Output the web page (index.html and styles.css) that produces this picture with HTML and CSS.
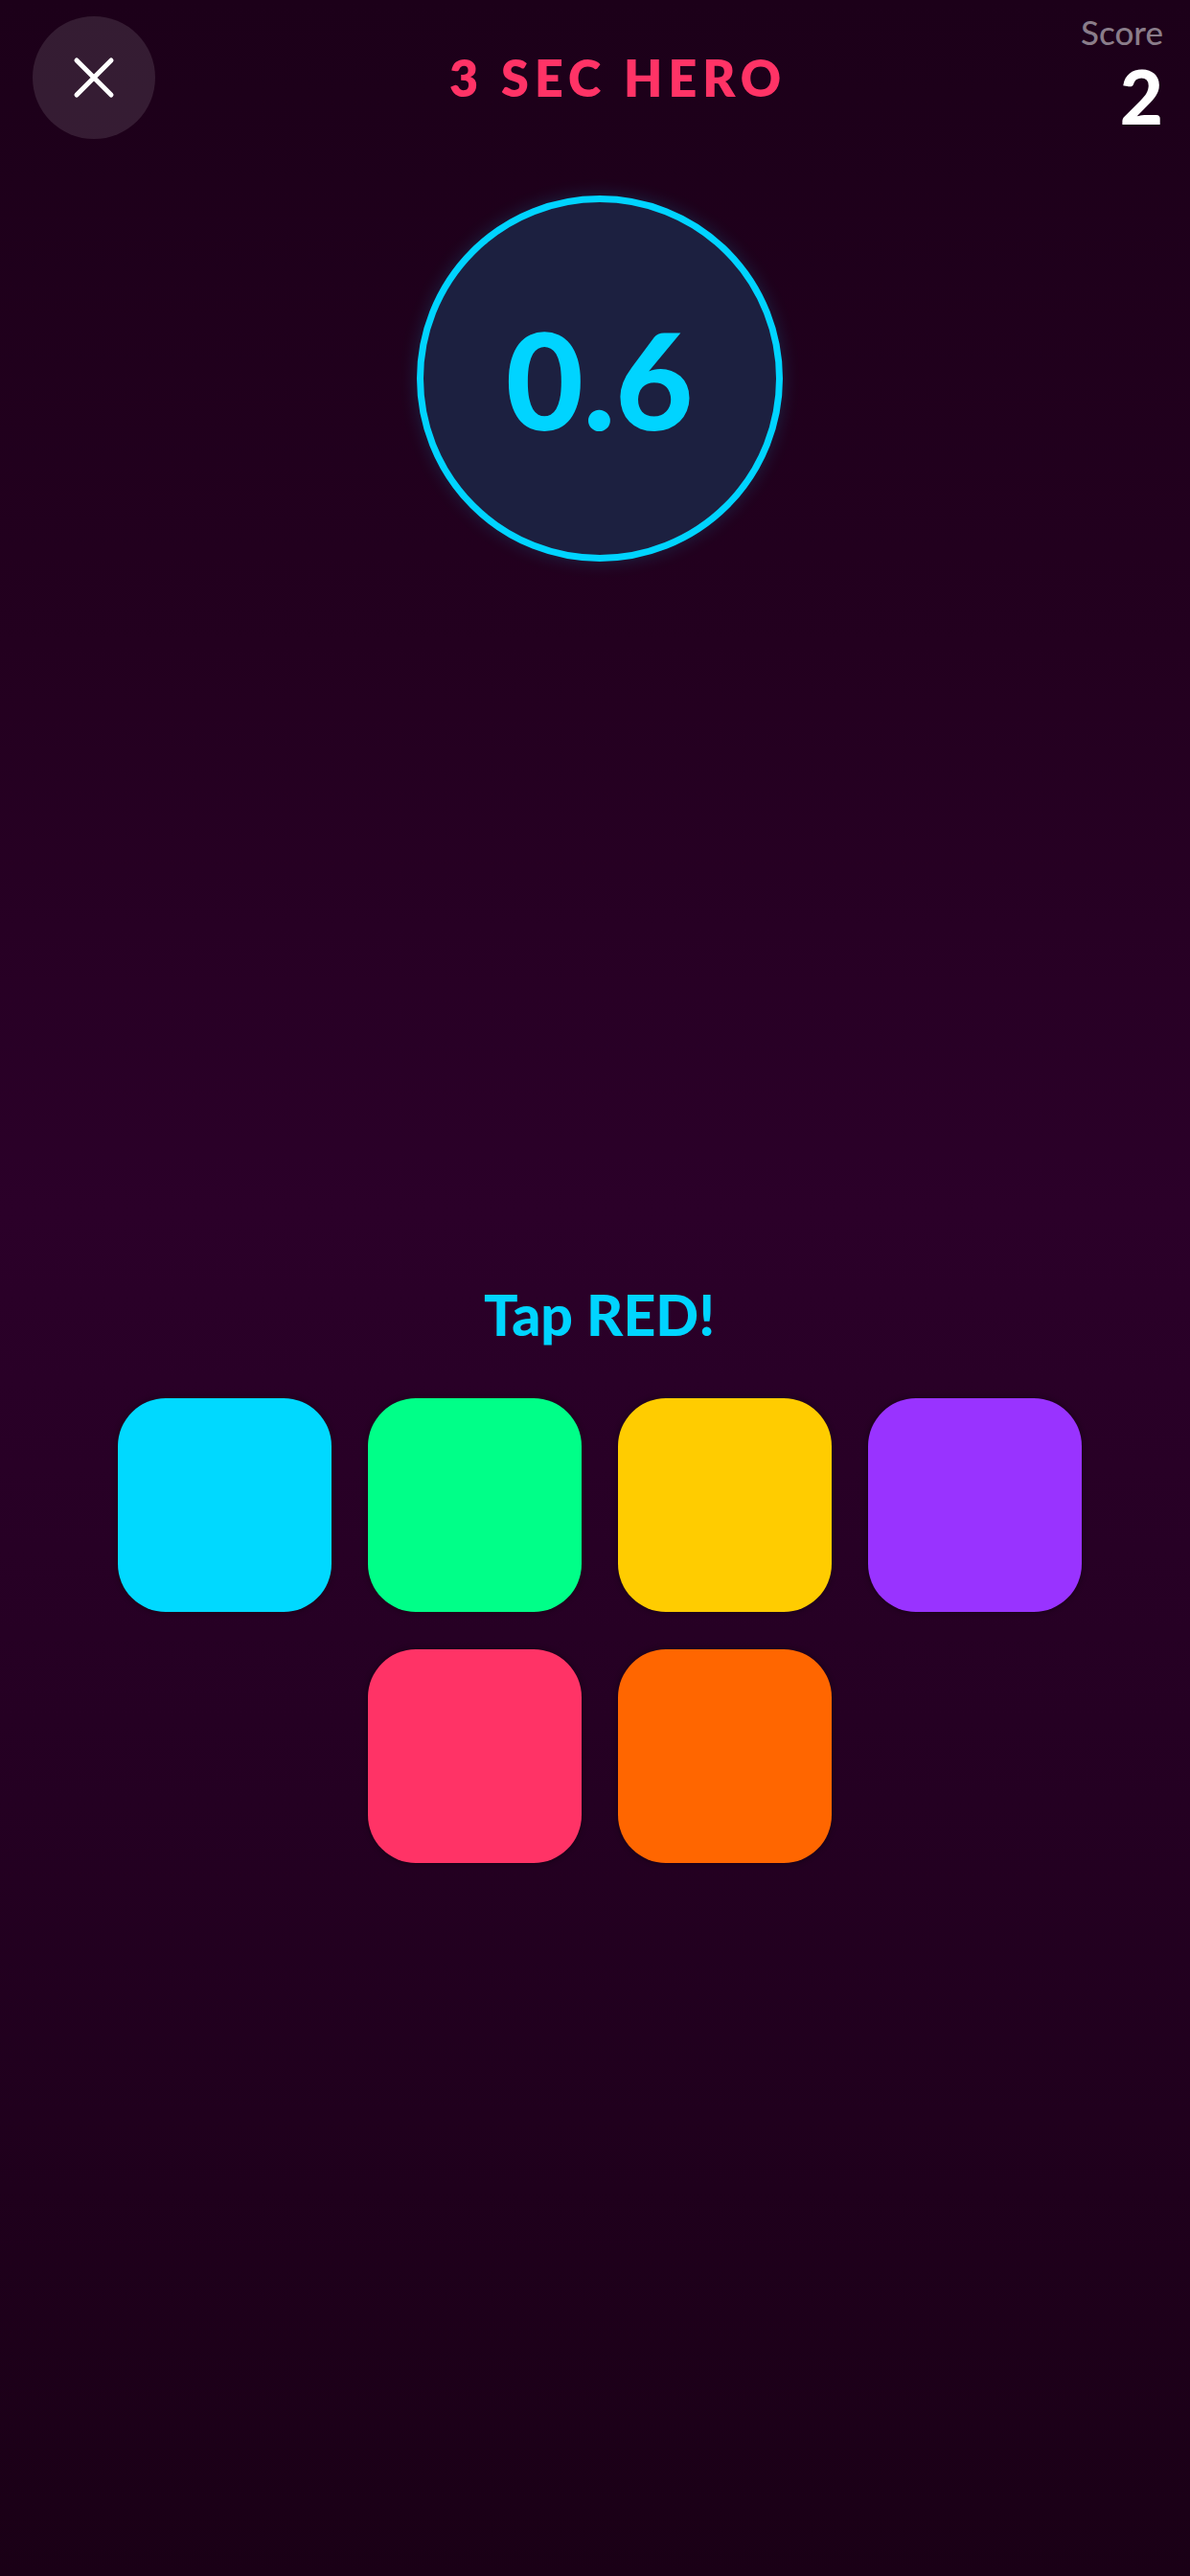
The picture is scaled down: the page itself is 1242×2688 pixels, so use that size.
FILE: index.html
```html
<!DOCTYPE html>
<html lang="en">
<head>
<meta charset="utf-8">
<title>3 SEC HERO</title>
<link rel="stylesheet" href="styles.css">
</head>
<body>
<div class="app">
  <header class="header">
    <button class="close" aria-label="Close">
      <svg width="44" height="44" viewBox="0 0 44 44" aria-hidden="true">
        <path d="M4 4 L40 40 M40 4 L4 40" stroke="#ffffff" stroke-width="5" stroke-linecap="round" fill="none"/>
      </svg>
    </button>
    <h1 class="title">3 SEC HERO</h1>
    <div class="score">
      <div class="score-label">Score</div>
      <div class="score-value">2</div>
    </div>
  </header>
  <main class="stage">
    <div class="timer"><span class="timer-value">0.6</span></div>
    <div class="prompt">Tap RED!</div>
    <div class="tiles">
      <div class="tile tile-cyan"></div>
      <div class="tile tile-green"></div>
      <div class="tile tile-yellow"></div>
      <div class="tile tile-purple"></div>
      <div class="tile tile-red"></div>
      <div class="tile tile-orange"></div>
    </div>
  </main>
</div>
</body>
</html>
```
FILE: styles.css
```css
* { box-sizing: border-box; }
html, body {
  margin: 0;
  padding: 0;
}
body {
  width: 1242px;
  height: 2688px;
  overflow: hidden;
  font-family: "Lato", "Noto Sans", sans-serif;
  background: linear-gradient(180deg, #1c0019 0%, #23001f 25%, #2b0029 47%, #240022 70%, #1a0016 100%);
  color: #ffffff;
}
.app {
  padding: 17px 28px 0 34px;
}
.header {
  display: grid;
  grid-template-columns: 128px 1fr 100px;
  align-items: start;
}
.close {
  width: 128px;
  height: 128px;
  border-radius: 50%;
  border: none;
  padding: 0;
  background: rgba(255, 255, 255, 0.11);
  display: flex;
  align-items: center;
  justify-content: center;
}
.title {
  margin: 0;
  text-align: center;
  font-size: 52px;
  font-weight: 800;
  letter-spacing: 6px;
  line-height: 128px;
  color: #ff3366;
  padding-left: 14px;
}
.score {
  text-align: right;
  margin-top: -5px;
}
.score-label {
  font-size: 35px;
  color: #8a7d8a;
  font-weight: 500;
}
.score-value {
  margin-top: 0;
  font-size: 78px;
  font-weight: 900;
  line-height: 1.2;
  color: #ffffff;
}
.stage {
  display: flex;
  flex-direction: column;
  align-items: center;
  padding-left: 6px;
  padding-right: 3px;
}
.timer {
  margin-top: 56px;
  width: 382px;
  height: 382px;
  border-radius: 50%;
  border: 7px solid #00d4ff;
  background: #1c2040;
  box-shadow: 0 0 18px rgba(0, 212, 255, 0.18);
  display: flex;
  align-items: center;
  justify-content: center;
}
.timer-value {
  font-size: 140px;
  font-weight: 900;
  color: #00d4ff;
  line-height: 1;
  margin-top: 0;
}
.prompt {
  margin-top: 750px;
  font-size: 59px;
  font-weight: 900;
  color: #00d4ff;
}
.tiles {
  margin-top: 52px;
  width: 1007px;
  display: flex;
  flex-wrap: wrap;
  justify-content: center;
  column-gap: 38px;
  row-gap: 39px;
}
.tile {
  width: 223px;
  height: 223px;
  border-radius: 50px;
  box-shadow: 0 0 6px rgba(0, 0, 0, 0.45);
}
.tile-cyan { background: #00d9ff; }
.tile-green { background: #00ff88; }
.tile-yellow { background: #ffcc00; }
.tile-purple { background: #9933ff; }
.tile-red { background: #ff3366; }
.tile-orange { background: #ff6600; }
```
